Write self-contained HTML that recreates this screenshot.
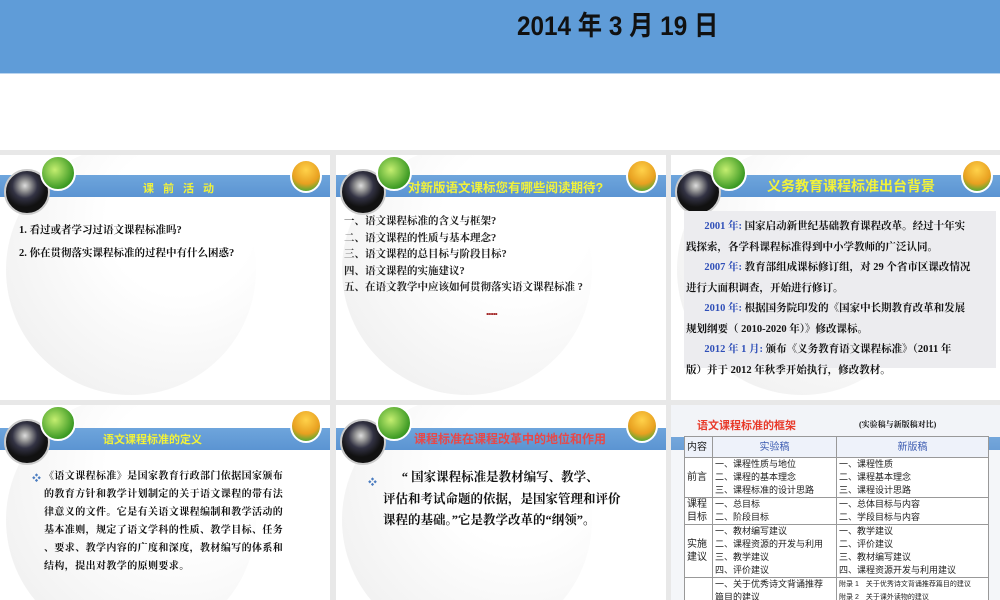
<!DOCTYPE html>
<html><head><meta charset="utf-8"><style>
*{margin:0;padding:0;box-sizing:border-box}
body{width:1000px;height:600px;overflow:hidden;background:#e8e8e8;position:relative;font-family:"Liberation Serif","Noto Serif CJK SC",serif}
.top{position:absolute;left:0;top:0;width:1000px;height:74px;background:#5f9cd8;border-bottom:1px solid #b9d4ef}
.date{position:absolute;left:517px;top:4px;font-size:27px;font-weight:bold;color:#111;font-family:"Liberation Sans","Noto Sans CJK SC",sans-serif;transform:scaleX(.9);transform-origin:left;white-space:nowrap}
.white{position:absolute;left:0;top:74px;width:1000px;height:76px;background:#fff}
.s{position:absolute;width:330px;height:245px;background:#fff;overflow:hidden}
.s .c{position:absolute;left:6px;top:-10px;width:250px;height:250px;border-radius:50%;background:radial-gradient(circle at 70% 30%,#fff 30%,#ececec 100%)}
.bar{position:absolute;left:0;top:20px;width:330px;height:22px;background:linear-gradient(#6ea5dc,#5b94d2)}
.d{position:absolute;left:4px;top:14px;width:46px;height:46px;border-radius:50%;background:radial-gradient(circle at 45% 35%,#ddd 0,#999 15%,#334 35%,#111 60%);border:2px solid #ccc}
.g{position:absolute;left:40px;top:0px;width:36px;height:36px;border-radius:50%;background:radial-gradient(circle at 40% 40%,#c4ee70,#3c9a24 70%);border:2px solid #fff}
.o{position:absolute;left:290px;top:4px;width:32px;height:34px;border-radius:50%;background:radial-gradient(circle at 50% 30%,#ffd24a,#e8a020 55%,#6aa830 80%);border:2px solid #fff}
.t{position:absolute;top:22px;font-size:13px;font-weight:bold;color:#f2f23a;font-family:"Liberation Sans","Noto Sans CJK SC",sans-serif;white-space:nowrap}
.tx{position:absolute;font-size:10.5px;color:#111;white-space:nowrap;font-family:"Liberation Serif","Noto Serif CJK SC",serif}
.b{font-weight:bold}
.blue{color:#2f4fb8}
table{border-collapse:collapse;font-size:9px;font-family:"Liberation Sans","Noto Sans CJK SC",sans-serif;color:#222}
td{border:1px solid #999;vertical-align:middle;line-height:13px;padding:0 2px}
</style></head><body>
<div class="top"><div class="date">2014 年 3 月 19 日</div></div>
<div class="white"></div>

<div class="s" style="left:0;top:155px"><div class="c"></div><div class="bar"></div><div class="d"></div><div class="g"></div><div class="o"></div>
<div class="t" style="left:143px;letter-spacing:9px;font-size:11px;top:25px">课前活动</div>
<div class="tx b" style="left:19px;top:67px">1. 看过或者学习过语文课程标准吗?</div>
<div class="tx b" style="left:19px;top:90px">2. 你在贯彻落实课程标准的过程中有什么困惑?</div></div>

<div class="s" style="left:336px;top:155px"><div class="c"></div><div class="bar"></div><div class="d"></div><div class="g"></div><div class="o"></div>
<div class="t" style="left:72px;font-size:12.5px">对新版语文课标您有哪些阅读期待?</div>
<div class="tx" style="left:8px;top:59px;line-height:16.5px;font-size:10.5px;font-weight:bold;color:#222">一、语文课程标准的含义与框架?<br>二、语文课程的性质与基本理念?<br>三、语文课程的总目标与阶段目标?<br>四、语文课程的实施建议?<br>五、在语文教学中应该如何贯彻落实语文课程标准 ?</div>
<div class="tx" style="left:150px;top:155px;color:#a02020;font-size:8px;letter-spacing:-1px">••••••</div></div>

<div class="s" style="left:671px;top:155px"><div class="c"></div><div class="bar"></div><div class="d"></div><div class="g"></div><div class="o"></div>
<div class="t" style="left:96px;font-size:14px;top:21px">义务教育课程标准出台背景</div>
<div style="position:absolute;left:13px;top:56px;width:312px;height:157px;background:#ececef"></div>
<div class="tx b" style="left:15px;top:62px;line-height:20.5px;font-size:10.5px">
&nbsp;&nbsp;&nbsp;&nbsp;&nbsp;&nbsp;&nbsp;<span class="blue">2001 年:</span> 国家启动新世纪基础教育课程改革。经过十年实<br>践探索，各学科课程标准得到中小学教师的广泛认同。<br>
&nbsp;&nbsp;&nbsp;&nbsp;&nbsp;&nbsp;&nbsp;<span class="blue">2007 年:</span> 教育部组成课标修订组，对 29 个省市区课改情况<br>进行大面积调查，开始进行修订。<br>
&nbsp;&nbsp;&nbsp;&nbsp;&nbsp;&nbsp;&nbsp;<span class="blue">2010 年:</span> 根据国务院印发的《国家中长期教育改革和发展<br>规划纲要（ 2010-2020 年）》修改课标。<br>
&nbsp;&nbsp;&nbsp;&nbsp;&nbsp;&nbsp;&nbsp;<span class="blue">2012 年 1 月:</span> 颁布《义务教育语文课程标准》（2011 年<br>版）并于 2012 年秋季开始执行，修改教材。</div></div>

<div class="s" style="left:0;top:405px;height:195px"><div class="c"></div><div class="bar" style="top:23px"></div><div class="d"></div><div class="g"></div><div class="o"></div>
<div class="t" style="left:103px;top:26px;font-size:11px">语文课程标准的定义</div>
<div class="tx" style="left:32px;top:66px;color:#4a7cc0;font-size:9px">❖</div>
<div class="tx b" style="left:44px;top:63px;line-height:18px;font-size:10px;letter-spacing:0.4px">《语文课程标准》是国家教育行政部门依据国家颁布<br>的教育方针和教学计划制定的关于语文课程的带有法<br>律意义的文件。它是有关语文课程编制和教学活动的<br>基本准则，规定了语文学科的性质、教学目标、任务<br>、要求、教学内容的广度和深度，教材编写的体系和<br>结构，提出对教学的原则要求。</div></div>

<div class="s" style="left:336px;top:405px;height:195px"><div class="c"></div><div class="bar" style="top:23px"></div><div class="d"></div><div class="g"></div><div class="o"></div>
<div class="t" style="left:78px;top:25px;font-size:12px;color:#e84848">课程标准在课程改革中的地位和作用</div>
<div class="tx" style="left:32px;top:70px;color:#4a7cc0;font-size:9px">❖</div>
<div class="tx b" style="left:47px;top:62px;line-height:21.5px;font-size:12.5px">&nbsp;&nbsp;&nbsp;&nbsp;&nbsp;&nbsp;“ 国家课程标准是教材编写、教学、<br>评估和考试命题的依据，是国家管理和评价<br>课程的基础。”它是教学改革的“纲领”。</div></div>

<div class="s" style="left:671px;top:405px;height:195px;background:#f4f6f9">
<div class="bar" style="top:23px;opacity:.9"></div>
<div style="position:absolute;left:0;top:0;width:330px;height:32px;background:#f2f4f8"></div>
<div class="t" style="left:26px;top:12px;font-size:11px;color:#e83a2a">语文课程标准的框架</div>
<div class="tx" style="left:188px;top:14px;font-size:8px;font-weight:bold">(实验稿与新版稿对比)</div>
<table style="position:absolute;left:13px;top:31px;width:305px;background:#fff">
<tr style="height:21px;font-size:10px;color:#3a5ab0;background:#eef2fa"><td style="width:28px;color:#222">内容</td><td style="width:124px;text-align:center">实验稿</td><td style="text-align:center">新版稿</td></tr>
<tr><td style="font-size:10px">前言</td><td>一、课程性质与地位<br>二、课程的基本理念<br>三、课程标准的设计思路</td><td>一、课程性质<br>二、课程基本理念<br>三、课程设计思路</td></tr>
<tr><td style="font-size:10px">课程<br>目标</td><td>一、总目标<br>二、阶段目标</td><td>一、总体目标与内容<br>二、学段目标与内容</td></tr>
<tr><td style="font-size:10px">实施<br>建议</td><td>一、教材编写建议<br>二、课程资源的开发与利用<br>三、教学建议<br>四、评价建议</td><td>一、教学建议<br>二、评价建议<br>三、教材编写建议<br>四、课程资源开发与利用建议</td></tr>
<tr><td></td><td>一、关于优秀诗文背诵推荐<br>篇目的建议</td><td style="font-size:7px">附录 1　关于优秀诗文背诵推荐篇目的建议<br>附录 2　关于课外读物的建议</td></tr>
</table></div>
</body></html>
